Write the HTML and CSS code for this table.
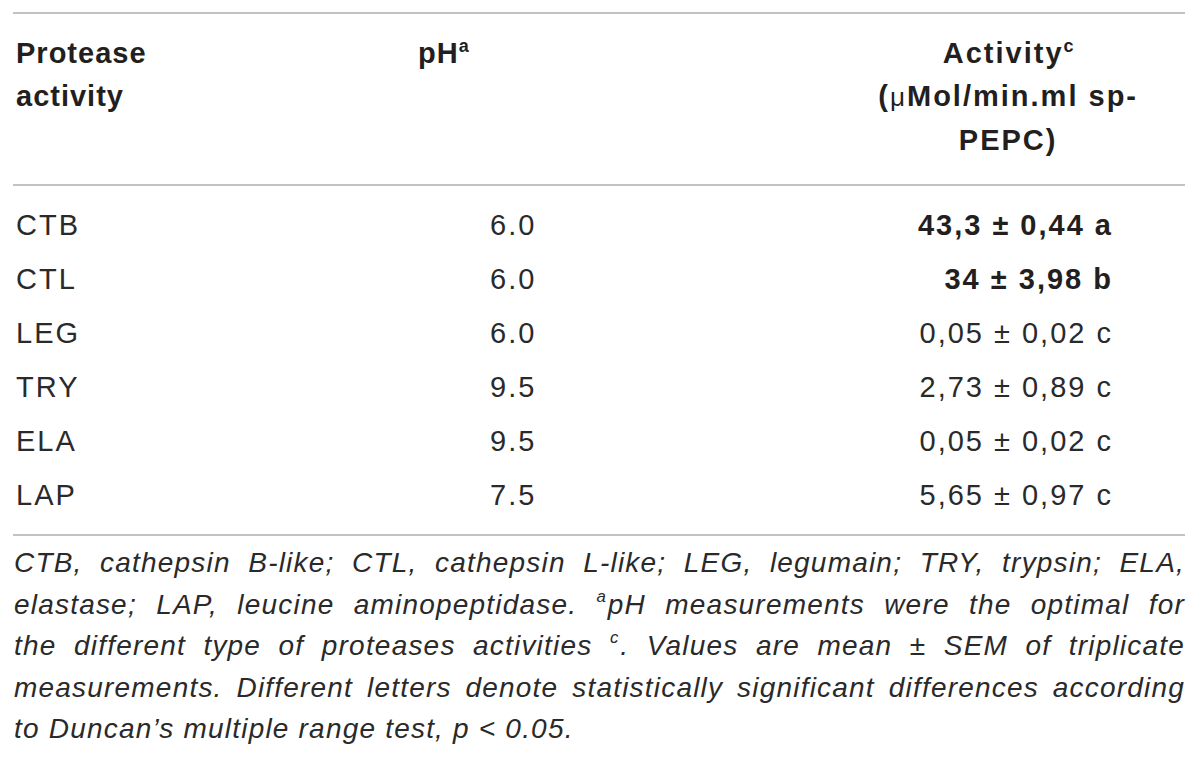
FILE: index.html
```html
<!DOCTYPE html>
<html lang="en">
<head>
    <meta charset="UTF-8">
    <meta name="viewport" content="width=device-width, initial-scale=1.0">
    <title>Protease activity table</title>
    <link rel="stylesheet" href="styles.css">
</head>
<body>

    <div class="sheet">
        <!-- Results table -->
        <table class="results">
            <colgroup>
                <col class="col-name">
                <col class="col-ph">
                <col class="col-act">
            </colgroup>
            <thead>
                <tr>
                    <th class="name">Protease<br>activity</th>
                    <th class="ph">pH<sup>a</sup></th>
                    <th class="act">
                        <span class="act-head">Activity<sup>c</sup><br>(<span class="mu">μ</span>Mol/min.ml sp-<br>PEPC)</span>
                    </th>
                </tr>
            </thead>
            <tbody>
                <tr class="first">
                    <td class="name">CTB</td>
                    <td class="ph">6.0</td>
                    <td class="act strong">43,3 ± 0,44 a</td>
                </tr>
                <tr>
                    <td class="name">CTL</td>
                    <td class="ph">6.0</td>
                    <td class="act strong">34 ± 3,98 b</td>
                </tr>
                <tr>
                    <td class="name">LEG</td>
                    <td class="ph">6.0</td>
                    <td class="act">0,05 ± 0,02 c</td>
                </tr>
                <tr>
                    <td class="name">TRY</td>
                    <td class="ph">9.5</td>
                    <td class="act">2,73 ± 0,89 c</td>
                </tr>
                <tr>
                    <td class="name">ELA</td>
                    <td class="ph">9.5</td>
                    <td class="act">0,05 ± 0,02 c</td>
                </tr>
                <tr class="last">
                    <td class="name">LAP</td>
                    <td class="ph">7.5</td>
                    <td class="act">5,65 ± 0,97 c</td>
                </tr>
            </tbody>
        </table>

        <!-- Footnote -->
        <p class="note">
            <span class="line">CTB, cathepsin B-like; CTL, cathepsin L-like; LEG, legumain; TRY, trypsin; ELA,</span>
            <span class="line">elastase; LAP, leucine aminopeptidase. <sup>a</sup>pH measurements were the optimal for</span>
            <span class="line">the different type of proteases activities <sup>c</sup>. Values are mean ± SEM of triplicate</span>
            <span class="line">measurements. Different letters denote statistically significant differences according</span>
            <span class="line end">to Duncan’s multiple range test, p &lt; 0.05.</span>
        </p>
    </div>

</body>
</html>
```

FILE: styles.css
```css
/* Basic Reset */
* {
    box-sizing: border-box;
    margin: 0;
    padding: 0;
}

body {
    font-family: 'Liberation Sans', Arial, Helvetica, sans-serif;
    background: #fff;
    color: #231f20;
}

.sheet {
    width: 1172px;
    margin-left: 13px;
    padding-top: 12px;
}

/* Table */
.results {
    width: 100%;
    table-layout: fixed;
    border-collapse: separate;
    border-spacing: 0;
    border-top: 2px solid #c2c2c2;
    border-bottom: 2px solid #c2c2c2;
    font-size: 29px;
    letter-spacing: 2px;
}

.col-name {
    width: 405px;
}

.col-ph {
    width: 382px;
}

.col-act {
    width: 385px;
}

.results th {
    font-weight: bold;
    line-height: 43px;
    letter-spacing: 1px;
    text-align: left;
    vertical-align: top;
    padding: 18px 0 22px;
    border-bottom: 2px solid #c2c2c2;
}

.results td {
    font-weight: normal;
    line-height: 54px;
    color: #2a2a2a;
    padding: 0;
}

.results .first td {
    padding-top: 12px;
}

.results .last td {
    padding-bottom: 12px;
}

.results .name {
    padding-left: 3px;
}

.results td.ph {
    padding-left: 72px;
}

.results th.act {
    text-align: right;
    letter-spacing: 2px;
    padding-right: 47px;
}

.act-head {
    display: inline-block;
    text-align: center;
}

.mu {
    font-weight: normal;
    font-size: 0.9em;
}

.results td.act {
    text-align: right;
    padding-right: 72px;
}

.results td.strong {
    font-weight: bold;
    color: #231f20;
}

sup {
    font-size: 0.62em;
    line-height: 0;
    vertical-align: 0.62em;
    letter-spacing: 0;
}

/* Footnote */
.note {
    margin-top: 6px;
    padding-left: 1px;
    font-style: italic;
    font-size: 28px;
    line-height: 41.5px;
    letter-spacing: 1.2px;
    color: #2a2a2a;
}

.note .line {
    display: block;
    white-space: nowrap;
    text-align: justify;
    text-align-last: justify;
}

.note .line.end {
    text-align-last: left;
}

.note sup {
    font-size: 0.6em;
    vertical-align: 0.7em;
    margin-right: 2px;
}
```
